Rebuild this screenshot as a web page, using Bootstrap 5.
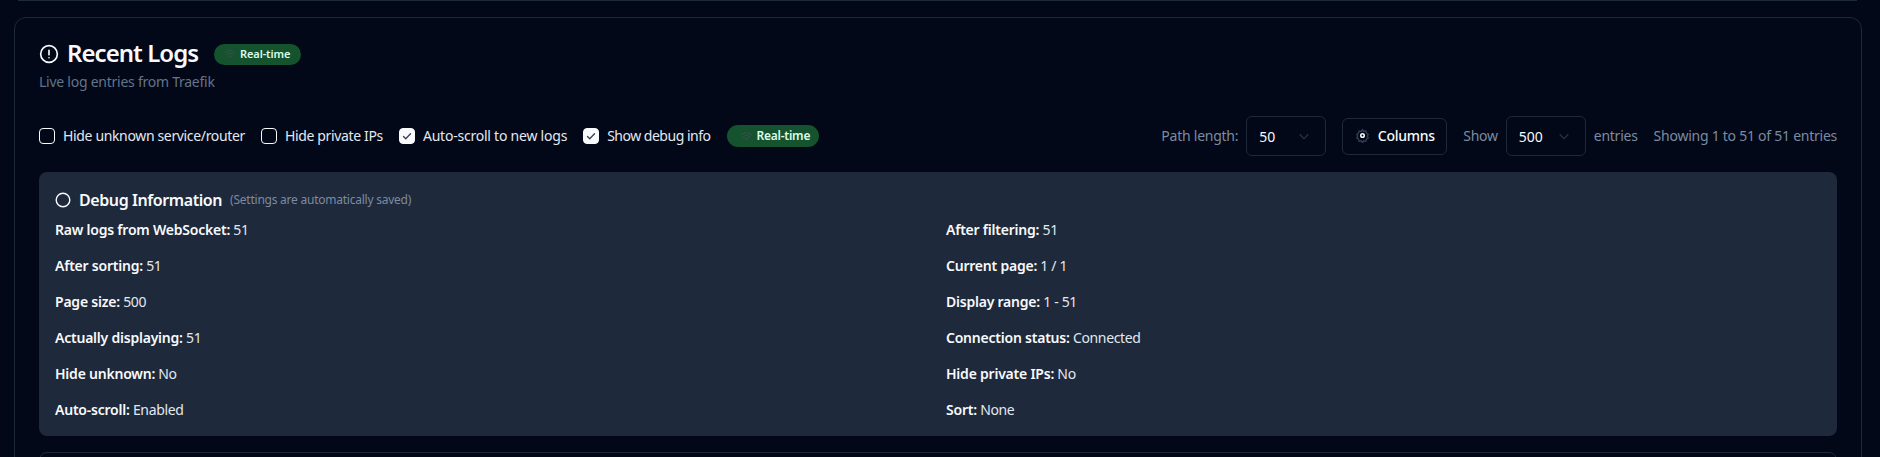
<!DOCTYPE html>
<html lang="en">
<head>
<meta charset="utf-8">
<title>Recent Logs</title>
<link href="https://cdn.jsdelivr.net/npm/bootstrap@5.3.0/dist/css/bootstrap.min.css" rel="stylesheet">
<style>
html,body{height:457px;overflow:hidden;}
body{background:#020817;font-family:"Noto Sans","Liberation Sans",sans-serif;font-size:14px;letter-spacing:-.025em;color:#f8fafc;}
.prev-edge{height:1px;background:#1e293b;margin:0 23px 16px 18px;}
.log-shell{margin:0 18px 0 14px;border:1px solid #1e293b;border-radius:12px;padding:24px;height:600px;background:#020817;}
.log-title{font-size:24px;line-height:22px;padding-bottom:2px;font-weight:600;margin:0;color:#f8fafc;letter-spacing:-.04em;}
.log-sub{color:#64748b;line-height:20px;margin-top:6px;margin-bottom:24px;letter-spacing:-.018em;}
.rt-pill{background:#14532d;color:#dcfce7;border-radius:999px;font-weight:600;white-space:nowrap;flex:none;}
.rt-pill svg{flex:none;}
.rt-sm{font-size:11px;letter-spacing:-.01em;padding:0 10px;gap:4px;width:87px;height:21px;}
.rt-md{font-size:12px;letter-spacing:-.02em;padding:0 10px 0 13px;gap:4px;width:92px;height:22px;}
.toolbar{height:40px;}
.form-check-input.chk{width:16px;height:16px;margin:0;background-color:transparent;border:1px solid #f8fafc;border-radius:4px;flex:none;}
.form-check-input.chk:checked{background-color:#f8fafc;border-color:#f8fafc;background-image:url("data:image/svg+xml,%3csvg xmlns='http://www.w3.org/2000/svg' viewBox='0 0 16 16'%3e%3cpath fill='none' stroke='%23334155' stroke-width='1.5' stroke-linecap='round' stroke-linejoin='round' d='M4 8.500l2.600 2.600L12 5.500'/%3e%3c/svg%3e");}
.chk-label{color:#e2e8f0;padding-bottom:2px;}
.chk-auto{letter-spacing:-.016em;}
.chk-debug{letter-spacing:-.035em;}
.dim{color:#7c8ba1;letter-spacing:-.018em;padding-bottom:2px;}
.form-select.sel{width:80px;height:40px;background-color:transparent;border:1px solid #1e293b;border-radius:6px;color:#f8fafc;font-size:14px;padding:0 12px;background-position:right 14px center;background-size:14px;background-image:url("data:image/svg+xml,%3csvg xmlns='http://www.w3.org/2000/svg' viewBox='0 0 16 16'%3e%3cpath fill='none' stroke='%23253246' stroke-width='1.5' d='M3 6l5 5 5-5'/%3e%3c/svg%3e");}
.btn.col-btn{height:37px;width:105px;background:transparent;border:1px solid #1e293b;border-radius:6px;color:#f8fafc;font-size:14px;font-weight:500;padding:0 0 2px;letter-spacing:-.02em;}
.dbg-panel{background:#1e293b;border-radius:8px;padding:16px;margin-top:16px;}
.dbg-head{height:24px;margin-bottom:8px;}
.dbg-title{font-size:16px;font-weight:600;color:#f8fafc;letter-spacing:-.026em;}
.dbg-note{font-size:12px;color:#7c8ba1;letter-spacing:-.02em;}
.dbg-grid{display:grid;grid-template-columns:1fr 1fr;gap:16px;line-height:20px;color:#e2e8f0;}
.dbg-grid b{font-weight:600;color:#f8fafc;letter-spacing:-.016em;}
.next-card{margin-top:16px;height:100px;border:1px solid #1e293b;border-radius:8px;}
</style>
</head>
<body>
<div class="prev-edge"></div>
<main class="log-shell">
  <header>
    <div class="d-flex align-items-center">
      <svg class="me-2" width="20" height="20" viewBox="0 0 24 24" fill="none" stroke="#f8fafc" stroke-width="2" stroke-linecap="round"><circle cx="12" cy="12" r="10"/><path d="M12 7.500v5.500M12 16.500v.01"/></svg>
      <h3 class="log-title">Recent Logs</h3>
      <span class="rt-pill rt-sm d-inline-flex align-items-center ms-3">
        <svg width="12" height="12" viewBox="0 0 24 24" fill="none" stroke="#3b4f52" stroke-width="2" stroke-linecap="round"><path d="M2 9a15 15 0 0 1 20 0M5.500 13a10 10 0 0 1 13 0M9 16.500a5 5 0 0 1 6 0M12 20v.01"/></svg>Real-time</span>
    </div>
    <div class="log-sub">Live log entries from Traefik</div>
  </header>
  <div class="toolbar d-flex align-items-center justify-content-between">
    <div class="d-flex align-items-center">
      <label class="d-flex align-items-center gap-2 me-3"><input class="form-check-input chk" type="checkbox"><span class="chk-label">Hide unknown service/router</span></label>
      <label class="d-flex align-items-center gap-2 me-3"><input class="form-check-input chk" type="checkbox"><span class="chk-label">Hide private IPs</span></label>
      <label class="d-flex align-items-center gap-2 me-3"><input class="form-check-input chk" type="checkbox" checked><span class="chk-label chk-auto">Auto-scroll to new logs</span></label>
      <label class="d-flex align-items-center gap-2 me-3"><input class="form-check-input chk" type="checkbox" checked><span class="chk-label chk-debug">Show debug info</span></label>
      <span class="rt-pill rt-md d-inline-flex align-items-center">
        <svg width="13" height="13" viewBox="0 0 24 24" fill="none" stroke="#3b4f52" stroke-width="2" stroke-linecap="round"><path d="M2 9a15 15 0 0 1 20 0M5.500 13a10 10 0 0 1 13 0M9 16.500a5 5 0 0 1 6 0M12 20v.01"/></svg>Real-time</span>
    </div>
    <div class="d-flex align-items-center">
      <span class="dim me-2">Path length:</span>
      <select class="form-select sel me-3"><option>50</option></select>
      <button class="btn col-btn d-inline-flex align-items-center justify-content-center gap-2 me-3" type="button">
        <svg width="15" height="15" viewBox="0 0 24 24" fill="none" stroke="#334155" stroke-width="2"><circle cx="12" cy="12" r="2.800" stroke="#f1f5f9" stroke-width="2.600"/><path d="M12 2.500l2 3 3.500-.8.8 3.500 3 2-1.800 2.800 1.800 2.800-3 2-.8 3.500-3.500-.8-2 3-2-3-3.500.8-.8-3.500-3-2 1.800-2.800L2.700 10.200l3-2 .8-3.500 3.500.8z"/></svg>Columns</button>
      <span class="dim me-2">Show</span>
      <select class="form-select sel me-2"><option>500</option></select>
      <span class="dim me-3">entries</span>
      <span class="dim">Showing 1 to 51 of 51 entries</span>
    </div>
  </div>
  <section class="dbg-panel">
    <div class="dbg-head d-flex align-items-center">
      <svg class="me-2" width="16" height="16" viewBox="0 0 16 16" fill="none" stroke="#f8fafc" stroke-width="1.400"><circle cx="8" cy="8" r="6.800"/></svg>
      <span class="dbg-title me-2">Debug Information</span>
      <span class="dbg-note">(Settings are automatically saved)</span>
    </div>
    <div class="dbg-grid">
      <div><b>Raw logs from WebSocket:</b> 51</div><div><b>After filtering:</b> 51</div>
      <div><b>After sorting:</b> 51</div><div><b>Current page:</b> 1 / 1</div>
      <div><b>Page size:</b> 500</div><div><b>Display range:</b> 1 - 51</div>
      <div><b>Actually displaying:</b> 51</div><div><b>Connection status:</b> Connected</div>
      <div><b>Hide unknown:</b> No</div><div><b>Hide private IPs:</b> No</div>
      <div><b>Auto-scroll:</b> Enabled</div><div><b>Sort:</b> None</div>
    </div>
  </section>
  <div class="next-card"></div>
</main>
<script src="https://cdn.jsdelivr.net/npm/bootstrap@5.3.0/dist/js/bootstrap.bundle.min.js"></script>
</body>
</html>
